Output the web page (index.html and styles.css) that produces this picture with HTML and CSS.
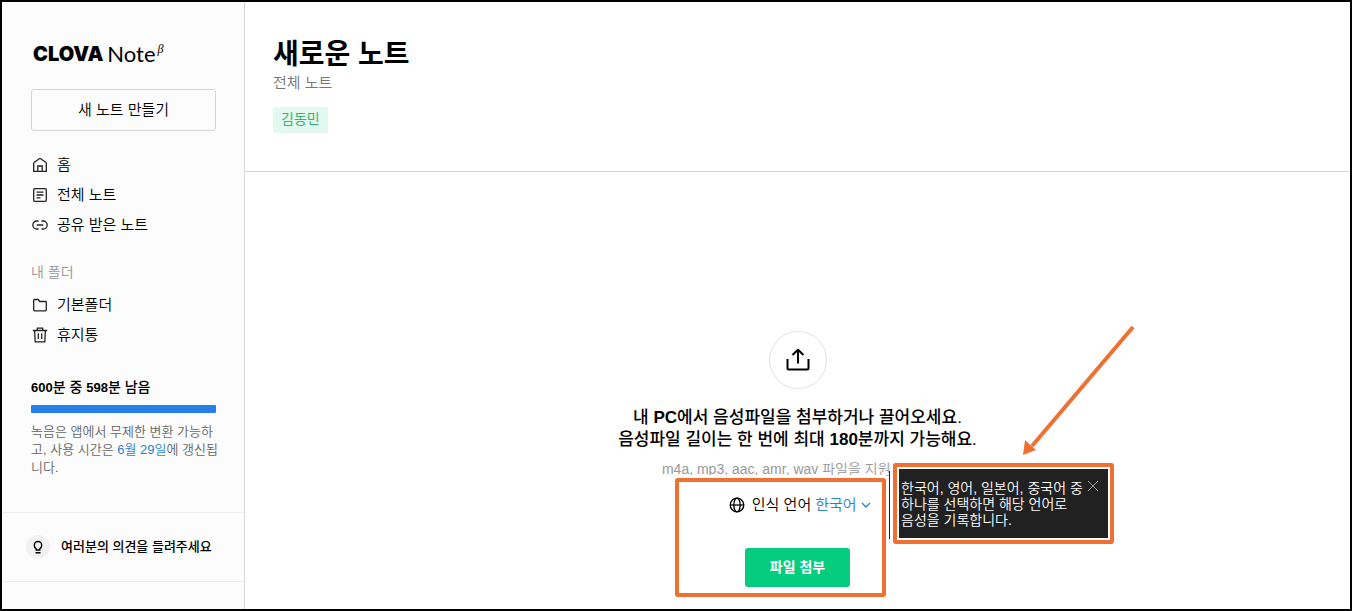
FILE: index.html
```html
<!DOCTYPE html>
<html lang="ko">
<head>
<meta charset="utf-8">
<meta name="viewport" content="width=device-width, initial-scale=1">
<title>CLOVA Note</title>
<link rel="stylesheet" href="styles.css">
</head>
<body>
<div class="app">
  <aside class="sidebar">
    <a class="logo" href="#"><b>CLOVA</b><span>Note</span><sup>β</sup></a>
    <button class="new-note" type="button">새 노트 만들기</button>
    <nav>
      <ul class="menu">
        <li><a href="#"><svg viewBox="0 0 16 16"><path d="M1.700 6.200Q1.700 5.600 2.300 5.200L7.300 1.700Q8 1.200 8.700 1.700L13.700 5.200Q14.300 5.600 14.300 6.200V14.300H1.700z"/><path d="M5.800 14V9h4.400v5"/></svg>홈</a></li>
        <li><a href="#"><svg viewBox="0 0 16 16"><rect x="1.700" y="1.700" width="12.600" height="12.600" rx="1"/><path d="M4.500 5.200h7M4.500 8h7M4.500 10.800h4"/></svg>전체 노트</a></li>
        <li><a href="#"><svg viewBox="0 0 16 16"><path d="M6.500 4H4.800a4 4 0 0 0 0 8h1.700M9.500 4h1.700a4 4 0 0 1 0 8H9.500M4.800 8h6.400"/></svg>공유 받은 노트</a></li>
      </ul>
      <h2 class="menu-title">내 폴더</h2>
      <ul class="menu">
        <li><a href="#"><svg viewBox="0 0 16 16"><path d="M1.700 3.200Q1.700 2.500 2.400 2.500H6.200L7.800 4.500H13.600Q14.300 4.500 14.300 5.200V13.100Q14.300 13.800 13.600 13.800H2.400Q1.700 13.800 1.700 13.100z"/></svg>기본폴더</a></li>
        <li><a href="#"><svg viewBox="0 0 16 16"><path d="M.8 3.500h14.400M5.300 3.300V1.200h5.400v2.100M2.600 3.700l.6 11.100h9.600l.6-11.100M6.300 6.300v5.700M9.700 6.300v5.700"/></svg>휴지통</a></li>
      </ul>
    </nav>
    <section class="quota">
      <h2><b>600</b>분 중 <b>598</b>분 남음</h2>
      <div class="bar"></div>
      <p>녹음은 앱에서 무제한 변환 가능하고, 사용 시간은 <em>6월 29일</em>에 갱신됩니다.</p>
    </section>
    <a class="feedback" href="#">
      <span class="bulb"><svg viewBox="0 0 16 16"><path d="M6.200 11V9.800C5 8.900 4.300 7.800 4.300 6.200a3.700 3.700 0 0 1 7.400 0c0 1.600-.7 2.700-1.900 3.600V11zM5.500 13.800h5"/></svg></span>여러분의 의견을 들려주세요
    </a>
  </aside>
  <main class="main">
    <header class="head">
      <h1>새로운 노트</h1>
      <p>전체 노트</p>
      <span class="tag">김동민</span>
    </header>
    <section class="upload">
      <div class="upload-icon"><svg viewBox="0 0 24 24"><path d="M1.500 11v9q0 1.500 1.500 1.500h18q1.500 0 1.500-1.500v-9M12 15.500V2M6.500 7 12 1.700 17.500 7"/></svg></div>
      <h2>내 <b>PC</b>에서 음성파일을 첨부하거나 끌어오세요.<br>음성파일 길이는 한 번에 최대 <b>180</b>분까지 가능해요.</h2>
      <p class="formats">m4a, mp3, aac, amr, wav 파일을 지원합니다.</p>
      <div class="language">
        <svg class="globe" viewBox="0 0 16 16"><circle cx="8" cy="8" r="6.800"/><ellipse cx="8" cy="8" rx="3.200" ry="6.800"/><path d="M1.200 8h13.600"/></svg>
        <label for="lang">인식 언어</label>
        <select id="lang"><option>한국어</option></select>
        <svg class="chevron" viewBox="0 0 10 10"><path d="m1 3 4 4 4-4"/></svg>
      </div>
      <button class="attach" type="button">파일 첨부</button>
      <div class="highlight"></div>
      <div class="tooltip" role="note">
        <p>한국어, 영어, 일본어, 중국어 중 하나를 선택하면 해당 언어로 음성을 기록합니다.</p>
        <button type="button" aria-label="닫기"><svg viewBox="0 0 10 10"><path d="m0 0 10 10M10 0 0 10"/></svg></button>
      </div>
      <svg class="arrow" viewBox="0 0 114 132"><path class="shaft" d="M111 2 10 121"/><path class="tip" d="m1 130 2-15 11 10z"/></svg>
    </section>
  </main>
</div>
</body>
</html>
```
FILE: styles.css
```css
* { box-sizing: border-box; }
body, h1, h2, p, ul { margin: 0; padding: 0; }
body {
  font-family: "Liberation Sans", "Noto Sans CJK KR", sans-serif;
  font-size: 15px;
  line-height: 20px;
  color: #000;
  background: #fff;
}
a { color: inherit; text-decoration: none; }
button, select { font: inherit; color: inherit; cursor: pointer; }
svg { fill: none; stroke: currentColor; flex: none; }

.app {
  display: flex;
  min-height: 100vh;
  border: 2px solid #000;
  overflow: hidden;
}

.sidebar {
  flex: 0 0 243px;
  display: flex;
  flex-direction: column;
  padding-top: 40px;
  background: #fcfcfc;
  border-right: 1px solid #d8d8d8;
}
.logo {
  display: flex;
  align-items: center;
  height: 24px;
  margin-left: 31px;
  font: 22px/24px Lato, sans-serif;
  color: #000;
}
.logo b { font: 900 20px/24px Inter, sans-serif; }
.logo span { margin-left: 4px; }
.logo sup {
  align-self: flex-start;
  margin-left: 2px;
  font: italic 12px/14px "Liberation Serif", serif;
}
.new-note {
  height: 42px;
  margin: 23px 28px 19px 29px;
  background: #fcfcfc;
  border: 1px solid #d5d5d5;
  border-radius: 3px;
  font-weight: 350;
}
.menu { list-style: none; padding-left: 30px; }
.menu a {
  display: flex;
  align-items: center;
  gap: 9px;
  height: 30px;
  font-weight: 350;
}
.menu svg { width: 16px; height: 16px; stroke-width: 1.3; color: #222; }
.menu-title {
  margin: 22px 0 8px 29px;
  font-size: 14px;
  font-weight: 350;
  color: #999;
}
.quota { padding: 27px 24px 35px 29px; }
.quota h2 { font-size: 14px; font-weight: 500; }
.quota b { font-size: 13px; line-height: 16px; }
.bar {
  height: 8px;
  margin: 8px 4px 10px 0;
  border-radius: 1px;
  background: #2680eb;
}
.quota p {
  font-size: 13px;
  line-height: 18px;
  font-weight: 350;
  color: #666;
  word-break: break-all;
}
.quota em { font-style: normal; color: #2b7fd0; }
.feedback {
  display: flex;
  align-items: center;
  gap: 11px;
  height: 70px;
  padding-left: 24px;
  border-top: 1px solid #eee;
  border-bottom: 1px solid #eee;
  font-size: 13px;
  font-weight: 500;
  white-space: nowrap;
}
.bulb {
  display: grid;
  place-items: center;
  width: 24px;
  height: 24px;
  border-radius: 50%;
  background: #f1f1f1;
}
.bulb svg { width: 16px; height: 16px; stroke-width: 1.4; }

.main { flex: 1; min-width: 0; }
.head {
  height: 170px;
  padding: 34px 28px 0;
  border-bottom: 1px solid #d8d8d8;
}
.head h1 { font-size: 28px; line-height: 37px; }
.head p { font-weight: 350; color: #777; }
.tag {
  display: inline-block;
  margin-top: 14px;
  padding: 0 8px 2px;
  border-radius: 2px;
  font-size: 14px;
  line-height: 24px;
  color: #3bb273;
  background: #e3f8ee;
}

.upload {
  position: relative;
  display: flex;
  flex-direction: column;
  align-items: center;
  width: 401px;
  margin: 159px auto 0;
}
.upload-icon {
  display: grid;
  place-items: center;
  width: 58px;
  height: 58px;
  border: 1px solid #e2e2e2;
  border-radius: 50%;
}
.upload-icon svg { width: 24px; height: 24px; stroke-width: 2; stroke-linejoin: round; }
.upload h2 {
  margin-top: 18px;
  font-size: 17px;
  line-height: 22px;
  font-weight: 500;
  text-align: center;
  white-space: nowrap;
}
.formats {
  margin-top: 8px;
  font-size: 14px;
  font-weight: 350;
  color: #999;
  white-space: nowrap;
}
.language {
  display: flex;
  align-items: center;
  gap: 4px;
  margin-top: 16px;
  padding-left: 5px;
  font-weight: 350;
}
.globe { width: 16px; height: 16px; margin-right: 3px; stroke-width: 1.3; }
.language select {
  appearance: none;
  height: 20px;
  padding: 0;
  border: 0;
  background: transparent;
  color: #2b7fd0;
}
.chevron { width: 10px; height: 10px; color: #2b7fd0; stroke-width: 1.3; }
.attach {
  width: 105px;
  height: 39px;
  margin-top: 33px;
  padding: 0 0 2px;
  border: 0;
  border-radius: 3px;
  background: #06cc80;
  color: #fff;
  font-size: 14px;
  font-weight: 700;
}

.highlight {
  position: absolute;
  left: 78px;
  top: 147px;
  width: 211px;
  height: 119px;
  border: 4px solid #ee7033;
  border-radius: 2px;
  outline: 3px solid #fff;
  pointer-events: none;
}
.tooltip {
  position: absolute;
  left: 296px;
  top: 132px;
  width: 221px;
  height: 81px;
  display: flex;
  padding: 11px 7px 0 2px;
  border: 4px solid #ee7033;
  border-radius: 2px;
  outline: 3px solid #fff;
  background: #212121;
  box-shadow: inset 0 0 0 2px #fff;
  color: #fff;
  font-size: 14px;
  line-height: 16px;
  font-weight: 350;
}
.tooltip::before {
  content: "";
  position: absolute;
  left: -8px;
  top: 4px;
  width: 1px;
  height: 68px;
  background: #212121;
}
.tooltip p {
  flex: none;
  width: 186px;
  padding: 2px 0 0 2px;
  word-break: keep-all;
}
.tooltip button {
  display: block;
  height: 16px;
  padding: 3px;
  border: 0;
  background: none;
  color: #999;
}
.tooltip button svg { display: block; width: 10px; height: 10px; }
.arrow {
  position: absolute;
  left: 425px;
  top: -6px;
  width: 114px;
  height: 132px;
  pointer-events: none;
}
.shaft { stroke: #ee7033; stroke-width: 4; }
.tip { fill: #ee7033; stroke: none; }
```
